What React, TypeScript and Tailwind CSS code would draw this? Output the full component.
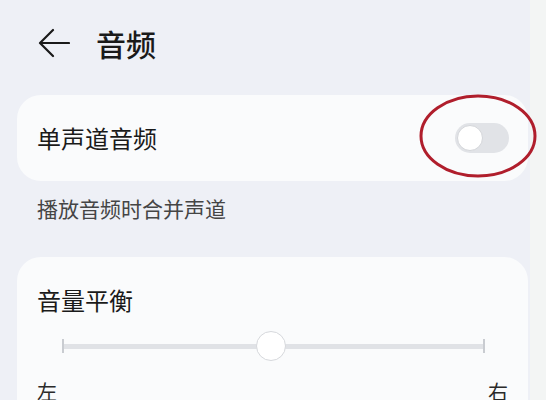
import React from "react";

const font = { fontFamily: '"Noto Sans CJK SC", "Noto Sans", sans-serif' };

const BackArrow: React.FC = () => (
  <svg width="32" height="30" viewBox="0 0 32 30" fill="none">
    <path d="M31 15H3M15 2L2 15l13 13" stroke="#1a1a1a" strokeWidth="2.2" strokeLinecap="round" strokeLinejoin="round" />
  </svg>
);

const App: React.FC = () => {
  const balance = 0.495;
  return (
    <div className="flex h-[400px] w-[546px] overflow-hidden bg-[#eef0f6] text-[#1a1a1a]" style={font}>
      <div className="flex w-[530px] shrink-0 flex-col pl-[17px] pr-[2px]">
        <div className="flex h-[86px] shrink-0 items-center gap-[26px] pl-[21px]">
          <BackArrow />
          <span className="text-[30px] font-medium leading-none">音频</span>
        </div>

        <div className="relative mt-[9px] flex h-[86px] shrink-0 items-center justify-between rounded-[24px] bg-[#fafbfc] pl-[20px] pr-[19px]">
          <span className="text-[24px] leading-none">单声道音频</span>
          <div className="relative flex h-[30px] w-[54px] items-center rounded-full bg-[#e1e3e7] p-[2px]">
            <div className="h-[26px] w-[26px] rounded-full border border-[#d4d6da] bg-white" />
          </div>
          <svg className="absolute left-[401px] top-[-2px]" width="120" height="88" viewBox="0 0 120 88" fill="none">
            <ellipse cx="60" cy="43" rx="57" ry="40" stroke="#b01e2c" strokeWidth="3" />
          </svg>
        </div>

        <div className="mt-[13px] shrink-0 pl-[20px] text-[21px] leading-[28px] text-[#454545]">播放音频时合并声道</div>

        <div className="mt-[35px] flex shrink-0 flex-col rounded-t-[24px] bg-[#fafbfc] pl-[20px] pr-[20px] pt-[27px] pb-[20px]">
          <span className="text-[24px] leading-[32px]">音量平衡</span>
          <div className="relative mt-[15px] ml-[25px] mr-[23px] flex h-[30px] items-center">
            <div className="h-[14px] w-[2px] bg-[#c9ccd1]" />
            <div className="h-[5px] flex-1 bg-[#e0e2e6]" />
            <div className="h-[14px] w-[2px] bg-[#c9ccd1]" />
            <div
              className="absolute top-0 h-[30px] w-[30px] -translate-x-1/2 rounded-full border border-[#d6d8dc] bg-white"
              style={{ left: `${balance * 100}%` }}
            />
          </div>
          <div className="mt-[19px] flex justify-between text-[20px] leading-[24px] text-[#2a2a2a]">
            <span>左</span>
            <span>右</span>
          </div>
        </div>
      </div>
      <div className="flex-1 bg-[#f3f5f4]" />
    </div>
  );
};

export default App;
